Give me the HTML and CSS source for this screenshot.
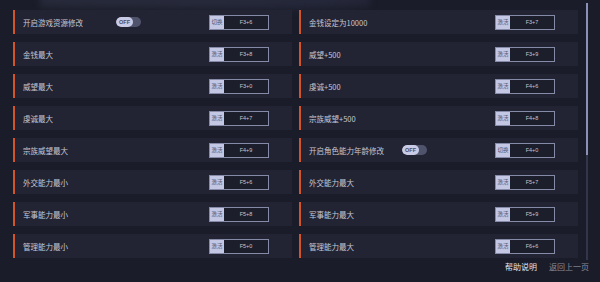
FILE: index.html
```html
<!DOCTYPE html>
<html lang="zh-CN">
<head>
  <meta charset="UTF-8">
  <title>修改器</title>
  <link rel="stylesheet" href="styles.css">
</head>
<body>
  <div class="bg-art"></div>
  <div class="main">
    <div class="lists">
      <!-- left column -->
      <div class="panel">
        <div class="row">
          <span class="name">开启游戏资源修改</span>
          <span class="toggle"><span class="knob">OFF</span></span>
          <span class="key"><span class="act">切换</span><span class="combo">F3+6</span></span>
        </div>
        <div class="row"><span class="name">金钱最大</span><span class="key"><span class="act">激活</span><span class="combo">F3+8</span></span></div>
        <div class="row"><span class="name">威望最大</span><span class="key"><span class="act">激活</span><span class="combo">F3+0</span></span></div>
        <div class="row"><span class="name">虔诚最大</span><span class="key"><span class="act">激活</span><span class="combo">F4+7</span></span></div>
        <div class="row"><span class="name">宗族威望最大</span><span class="key"><span class="act">激活</span><span class="combo">F4+9</span></span></div>
        <div class="row"><span class="name">外交能力最小</span><span class="key"><span class="act">激活</span><span class="combo">F5+6</span></span></div>
        <div class="row"><span class="name">军事能力最小</span><span class="key"><span class="act">激活</span><span class="combo">F5+8</span></span></div>
        <div class="row"><span class="name">管理能力最小</span><span class="key"><span class="act">激活</span><span class="combo">F5+0</span></span></div>
      </div>

      <!-- right column -->
      <div class="panel">
        <div class="row"><span class="name">金钱设定为10000</span><span class="key"><span class="act">激活</span><span class="combo">F3+7</span></span></div>
        <div class="row"><span class="name">威望+500</span><span class="key"><span class="act">激活</span><span class="combo">F3+9</span></span></div>
        <div class="row"><span class="name">虔诚+500</span><span class="key"><span class="act">激活</span><span class="combo">F4+6</span></span></div>
        <div class="row"><span class="name">宗族威望+500</span><span class="key"><span class="act">激活</span><span class="combo">F4+8</span></span></div>
        <div class="row">
          <span class="name">开启角色能力年龄修改</span>
          <span class="toggle"><span class="knob">OFF</span></span>
          <span class="key"><span class="act">切换</span><span class="combo">F4+0</span></span>
        </div>
        <div class="row"><span class="name">外交能力最大</span><span class="key"><span class="act">激活</span><span class="combo">F5+7</span></span></div>
        <div class="row"><span class="name">军事能力最大</span><span class="key"><span class="act">激活</span><span class="combo">F5+9</span></span></div>
        <div class="row"><span class="name">管理能力最大</span><span class="key"><span class="act">激活</span><span class="combo">F6+6</span></span></div>
      </div>
    </div>

    <div class="scrollbar"><div class="thumb"></div></div>
  </div>

  <div class="footer">
    <a class="help">帮助说明</a>
    <a class="back">返回上一页</a>
  </div>
</body>
</html>
```

FILE: styles.css
```css
body {
  margin: 0;
  width: 600px;
  height: 282px;
  overflow: hidden;
  background-color: #1a1c29;
  font-family: "Noto Sans CJK SC", "Noto Sans", sans-serif;
  color: #c6c8d4;
  position: relative;
}

/* faint game artwork behind the list */
.bg-art {
  position: absolute;
  top: -20px;
  left: 40px;
  width: 330px;
  height: 34px;
  background:
    radial-gradient(ellipse at 20% 50%, #272a3a 0 30%, transparent 60%),
    radial-gradient(ellipse at 65% 50%, #25283a 0 35%, transparent 65%);
  filter: blur(3px);
}

.main {
  position: relative;
  display: flex;
  padding: 3px 0 0 13px;
}

.lists {
  display: flex;
  gap: 7px;
  margin-top: 7px;
}

.panel {
  display: flex;
  flex-direction: column;
  gap: 8px;
  width: 279px;
}

.row {
  display: flex;
  align-items: center;
  height: 24px;
  padding-left: 8px;
  background-color: #222434;
  border-left: 2px solid #d0562a;
  font-size: 7.5px;
}

.name {
  flex: 0 0 93px;
  white-space: nowrap;
}

.toggle {
  display: flex;
  width: 25px;
  height: 10px;
  border-radius: 5px;
  background-color: #50536c;
  overflow: hidden;
}

.knob {
  width: 17px;
  height: 10px;
  border-radius: 5px;
  background-color: #c9cbe6;
  color: #4a4c62;
  font-family: "Liberation Sans", sans-serif;
  font-size: 5.5px;
  font-weight: bold;
  line-height: 10px;
  text-align: center;
}

.key {
  display: flex;
  margin-left: auto;
  margin-right: 23px;
  width: 60px;
  height: 15px;
  border: 1px solid #858aa6;
  box-sizing: border-box;
  font-size: 5.5px;
  line-height: 13px;
  overflow: hidden;
}

.act {
  width: 14px;
  background-color: #c4c7e4;
  color: #4d4f66;
  text-align: center;
  overflow: hidden;
}

.combo {
  flex: 1;
  background-color: #1c1e2b;
  color: #c4c6d6;
  text-align: center;
  font-family: "Liberation Sans", sans-serif;
}

.scrollbar {
  width: 2px;
  height: 257px;
  margin-left: 8px;
  background-color: #33364b;
}

.thumb {
  height: 152px;
  background-color: #8c90b6;
}

.footer {
  display: flex;
  justify-content: flex-end;
  gap: 12px;
  padding-right: 11px;
  margin-top: 1px;
  font-size: 8px;
  line-height: 12px;
}

.help {
  color: #e6e7ef;
}

.back {
  color: #8a8c99;
}
```
